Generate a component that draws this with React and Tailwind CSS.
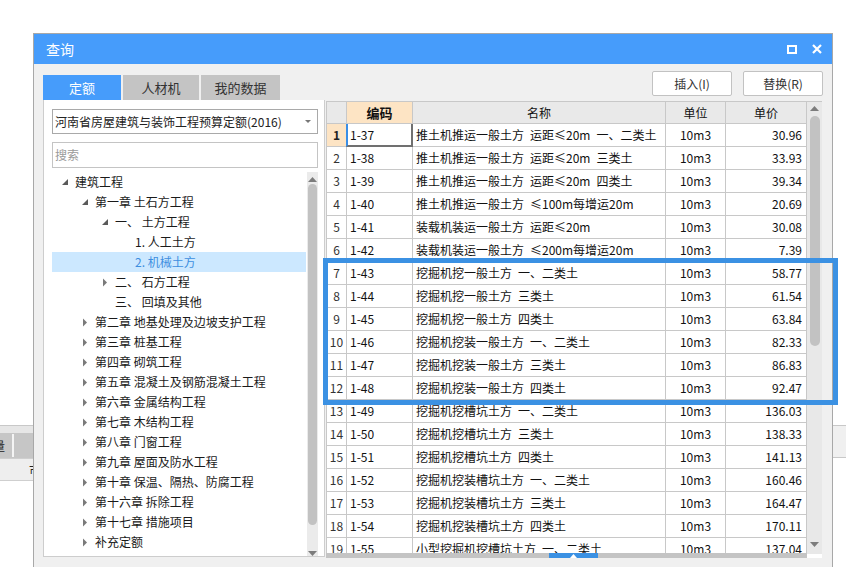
import React from 'react';

const font = { fontFamily: '"Noto Sans CJK SC", "Noto Sans", sans-serif' };

const rows = [
  ['1-37', '推土机推运一般土方 运距≤20m 一、二类土', '30.96'],
  ['1-38', '推土机推运一般土方 运距≤20m 三类土', '33.93'],
  ['1-39', '推土机推运一般土方 运距≤20m 四类土', '39.34'],
  ['1-40', '推土机推运一般土方 ≤100m每增运20m', '20.69'],
  ['1-41', '装载机装运一般土方 运距≤20m', '30.08'],
  ['1-42', '装载机装运一般土方 ≤200m每增运20m', '7.39'],
  ['1-43', '挖掘机挖一般土方 一、二类土', '58.77'],
  ['1-44', '挖掘机挖一般土方 三类土', '61.54'],
  ['1-45', '挖掘机挖一般土方 四类土', '63.84'],
  ['1-46', '挖掘机挖装一般土方 一、二类土', '82.33'],
  ['1-47', '挖掘机挖装一般土方 三类土', '86.83'],
  ['1-48', '挖掘机挖装一般土方 四类土', '92.47'],
  ['1-49', '挖掘机挖槽坑土方 一、二类土', '136.03'],
  ['1-50', '挖掘机挖槽坑土方 三类土', '138.33'],
  ['1-51', '挖掘机挖槽坑土方 四类土', '141.13'],
  ['1-52', '挖掘机挖装槽坑土方 一、二类土', '160.46'],
  ['1-53', '挖掘机挖装槽坑土方 三类土', '164.47'],
  ['1-54', '挖掘机挖装槽坑土方 四类土', '170.11'],
  ['1-55', '小型挖掘机挖槽坑土方 一、二类土', '137.04'],
];

const tree = [
  [0, '建筑工程', 'open'],
  [1, '第一章 土石方工程', 'open'],
  [2, '一、 土方工程', 'open'],
  [3, '1. 人工土方', null],
  [3, '2. 机械土方', null, true],
  [2, '二、 石方工程', 'closed'],
  [2, '三、 回填及其他', null],
  [1, '第二章 地基处理及边坡支护工程', 'closed'],
  [1, '第三章 桩基工程', 'closed'],
  [1, '第四章 砌筑工程', 'closed'],
  [1, '第五章 混凝土及钢筋混凝土工程', 'closed'],
  [1, '第六章 金属结构工程', 'closed'],
  [1, '第七章 木结构工程', 'closed'],
  [1, '第八章 门窗工程', 'closed'],
  [1, '第九章 屋面及防水工程', 'closed'],
  [1, '第十章 保温、隔热、防腐工程', 'closed'],
  [1, '第十六章 拆除工程', 'closed'],
  [1, '第十七章 措施项目', 'closed'],
  [1, '补充定额', 'closed'],
  [0, '装饰工程', 'closed'],
];

const indents = ['pl-[10px]', 'pl-[30px]', 'pl-[50px]', 'pl-[70px]'];

function Arrow({ state }) {
  if (state === 'open') {
    return (
      <svg width="13" height="8" viewBox="0 0 13 8" className="shrink-0">
        <polygon points="6,1 6,7 0,7" fill="#5a5a5a" />
      </svg>
    );
  }
  if (state === 'closed') {
    return (
      <svg width="13" height="9" viewBox="0 0 13 9" className="shrink-0">
        <polygon points="1,0.5 5,4.5 1,8.5" fill="#7a7a7a" />
      </svg>
    );
  }
  return <span className="w-[13px] shrink-0" />;
}

function ScrollArrow({ down }) {
  return (
    <svg width="9" height="5" viewBox="0 0 9 5">
      <polygon points={down ? '0,0 9,0 4.5,5' : '0,5 9,5 4.5,0'} fill="#7c7c7c" />
    </svg>
  );
}

export default function App() {
  return (
    <div className="relative w-[846px] h-[567px] overflow-hidden bg-white" style={font}>
      {/* app behind the dialog */}
      <div className="flex flex-col">
        <div className="h-[425px]" />
        <div className="flex justify-between border-t border-[#c8c8c8]">
          <div className="w-[33px]">
            <div className="h-[7px] bg-[#e6e6e6]" />
            <div className="h-[25px] bg-[#c6c6c6] flex items-center text-[12px] text-[#222] overflow-hidden">
              <span className="-ml-[7px]">量</span>
              <span className="ml-[7px] w-[2px] h-[23px] bg-[#f4f4f4]" />
            </div>
            <div className="h-[23px] bg-[#eeeeee] border-y border-[#cfcfcf] flex items-center text-[12px] text-[#222] overflow-hidden">
              <span className="ml-[15px] w-px h-full bg-[#c8c8c8]" />
              <span className="ml-[14px]">市</span>
            </div>
          </div>
          <div className="w-[14px] h-[32px] bg-[#f0f0f0] border-b border-[#c8c8c8]" />
        </div>
      </div>

      {/* dialog */}
      <div className="absolute left-[33px] top-[33px] w-[800px] h-[560px] border border-[#a8a8a8] bg-[#f0f0f0] flex flex-col">
        <div className="h-[30px] bg-[#469cfb] flex items-center justify-between pl-[12px] pr-[10px] text-white">
          <span className="text-[14px]">查询</span>
          <div className="flex items-center gap-[15px]">
            <span className="w-[10px] h-[9px] border-2 border-white" />
            <svg width="10" height="10" viewBox="0 0 10 10">
              <path d="M1 1 L9 9 M9 1 L1 9" stroke="white" strokeWidth="2.2" />
            </svg>
          </div>
        </div>

        <div className="h-[36px] flex items-end justify-between px-[9px]">
          <div className="flex gap-[2px] text-[13px]">
            <div className="w-[78px] h-[25px] bg-[#469cfb] text-white flex items-center justify-center">定额</div>
            <div className="w-[76px] h-[25px] bg-[#c4c4c4] text-[#333] flex items-center justify-center">人材机</div>
            <div className="w-[79px] h-[25px] bg-[#c4c4c4] text-[#333] flex items-center justify-center">我的数据</div>
          </div>
          <div className="flex gap-[11px] mb-[4px] text-[12px] text-[#333]">
            <div className="w-[80px] h-[25px] bg-white border border-[#c2c2c2] rounded-[2px] flex items-center justify-center">插入(I)</div>
            <div className="w-[80px] h-[25px] bg-white border border-[#c2c2c2] rounded-[2px] flex items-center justify-center">替换(R)</div>
          </div>
        </div>

        <div className="flex gap-[1px] pl-[9px]">
          {/* left tree panel */}
          <div className="w-[282px] h-[457px] bg-white border-l border-r border-b border-[#cdcdcd] pl-[8px] pt-[9px] flex flex-col">
            <div className="w-[266px] h-[25px] border border-[#a9a9a9] flex items-center justify-between pl-[2px] pr-[6px] text-[12px] text-[#222]">
              <span>河南省房屋建筑与装饰工程预算定额(2016)</span>
              <svg width="6" height="3" viewBox="0 0 6 3">
                <polygon points="0,0 6,0 3,3" fill="#777" />
              </svg>
            </div>
            <div className="w-[266px] h-[26px] mt-[8px] border border-[#c4c4c4] flex items-center pl-[2px] text-[12px] text-[#9a9a9a]">
              搜索
            </div>
            <div className="mt-[4px] flex h-[384px] overflow-hidden">
              <div className="w-[254px] flex flex-col">
                {tree.map(([level, text, state, sel], i) => (
                  <div
                    key={i}
                    className={`h-[20px] shrink-0 flex items-center text-[12px] whitespace-nowrap ${indents[level]} ${sel ? 'bg-[#cce8ff] text-[#3d8ee0]' : 'text-[#1a1a1a]'}`}
                  >
                    <Arrow state={state} />
                    <span>{text}</span>
                  </div>
                ))}
              </div>
              <div className="ml-[1px] w-[11px] bg-[#ebebeb] flex flex-col items-center">
                <div className="h-[10px] flex items-end"><ScrollArrow /></div>
                <div className="mt-[2px] w-[9px] h-[341px] rounded-full bg-[#c2c2c2]" />
                <div className="mt-[26px]"><ScrollArrow down /></div>
              </div>
            </div>
          </div>

          {/* grid */}
          <div className="relative mt-[1px] w-[496px] h-[457px] bg-white border-t border-[#c8c8c8] flex text-[12px] text-[#111]">
            <div className="w-[481px] flex flex-col">
              <div className="h-[22px] shrink-0 flex bg-[#e9e9e9] border-b border-[#c8c8c8] border-l">
                <div className="w-[20px] border-r border-[#c8c8c8]" />
                <div className="w-[66px] border-r border-[#c8c8c8] bg-[#fde4c4] font-bold flex items-center justify-center text-[13px]">编码</div>
                <div className="w-[253px] border-r border-[#c8c8c8] flex items-center justify-center">名称</div>
                <div className="w-[60px] border-r border-[#c8c8c8] flex items-center justify-center">单位</div>
                <div className="w-[81px] border-r border-[#c8c8c8] flex items-center justify-center">单价</div>
              </div>
              <div className="h-[430px] overflow-hidden flex flex-col border-l border-[#c8c8c8]">
                {rows.map(([code, name, price], i) => (
                  <div key={code} className="h-[23px] shrink-0 flex border-b border-[#c8c8c8]">
                    <div className={`w-[20px] border-r border-[#c8c8c8] flex items-center justify-center ${i === 0 ? 'bg-[#fde4c4] font-bold text-[#222]' : 'text-[#333]'}`}>
                      {i + 1}
                    </div>
                    <div className="relative w-[66px] border-r border-[#c8c8c8] flex items-center pl-[3px]">
                      {code}
                      {i === 0 && (
                        <span className="absolute -left-px -top-px -right-px -bottom-px border-2 border-[#707070] border-l-[#3a8ee6] border-t-[1px]" />
                      )}
                    </div>
                    <div className="w-[253px] border-r border-[#c8c8c8] flex items-center pl-[3px] whitespace-pre overflow-hidden">
                      {name.split(' ').join('\u2002')}
                    </div>
                    <div className="w-[60px] border-r border-[#c8c8c8] flex items-center justify-center">10m3</div>
                    <div className="w-[81px] border-r border-[#c8c8c8] flex items-center justify-end pr-[4px]">{price}</div>
                  </div>
                ))}
              </div>
              <div className="h-[5px] bg-[#c4c4c4] flex">
                <div className="ml-[223px] w-[49px] bg-[#3b91e3] flex justify-center items-end">
                  <svg width="7" height="4" viewBox="0 0 7 4">
                    <polygon points="0,4 7,4 3.5,0" fill="white" />
                  </svg>
                </div>
              </div>
            </div>
            <div className="w-[15px] h-[452px] bg-[#e8e8e8] flex flex-col items-center">
              <div className="h-[9px] flex items-end"><ScrollArrow /></div>
              <div className="mt-[5px] w-[10px] h-[230px] rounded-full bg-[#c2c2c2]" />
              <div className="mt-[196px]"><ScrollArrow down /></div>
            </div>

            {/* highlight box over rows 7-12 */}
            <div className="absolute left-[-3px] top-[156px] w-[515px] h-[147px] border-[5px] border-[#3b91e3]" />
          </div>
        </div>
      </div>
    </div>
  );
}
